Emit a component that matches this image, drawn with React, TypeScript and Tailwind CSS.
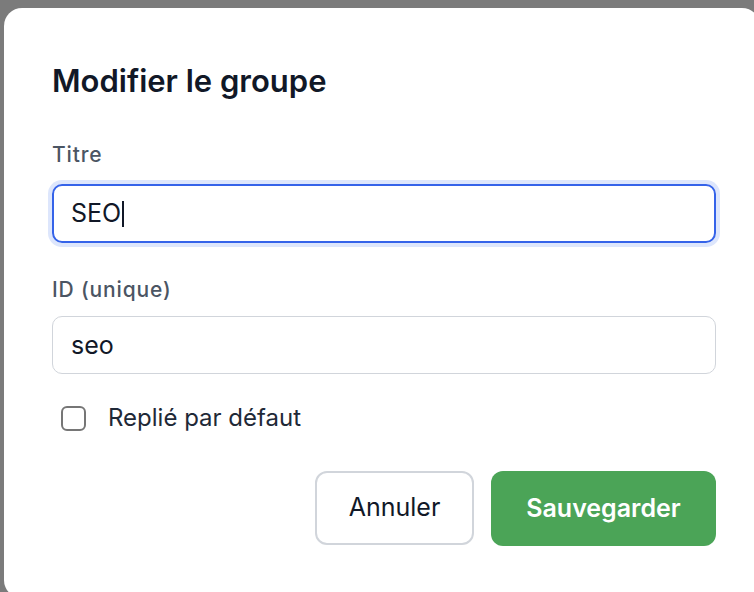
import { useState } from "react";

export default function App() {
  const [id, setId] = useState("seo");
  const [collapsed, setCollapsed] = useState(false);

  return (
    <div
      className="w-[754px] h-[592px] overflow-hidden bg-[#7b7b7b] pt-2 pl-1"
      style={{ fontFamily: "Inter, 'Noto Sans', 'Liberation Sans', sans-serif" }}
    >
      <div className="w-[756px] h-[590px] bg-white rounded-[18px] pl-12 pr-11 pt-[55px]">
        <h2 className="text-[31px] leading-9 font-semibold text-[#111827]">Modifier le groupe</h2>

        <div className="mt-[42px] text-[21px] leading-7 tracking-[0.04em] font-medium text-[#4b5563]">Titre</div>
        <div className="mt-[15px] h-[59px] rounded-[10px] border-2 border-[#3563e9] ring-4 ring-[#dde6fc] flex items-center pl-[17px] text-[25px] text-[#111827]">
          SEO<span className="inline-block w-[1.5px] h-[26px] bg-[#111827] ml-[1px]" />
        </div>

        <div className="mt-[33px] text-[21px] leading-7 tracking-[0.04em] font-medium text-[#4b5563]">ID (unique)</div>
        <input
          value={id}
          onChange={(e) => setId(e.target.value)}
          className="mt-3 w-full h-[58px] rounded-[10px] border border-[#d1d5db] pl-[18px] text-[25px] text-[#111827] outline-none"
        />

        <label className="mt-[28px] h-8 flex items-center gap-[22px] pl-[9px] text-[24px] leading-8 text-[#1f2937]">
          <input
            type="checkbox"
            checked={collapsed}
            onChange={(e) => setCollapsed(e.target.checked)}
            className="appearance-none w-[25px] h-[25px] border-2 border-[#767676] rounded-[6px] bg-white"
          />
          Replié par défaut
        </label>

        <div className="mt-[37px] flex justify-end gap-[17px]">
          <button className="w-[159px] h-[74px] rounded-[12px] border-2 border-[#d1d5db] bg-white text-[25px] text-[#111827]">
            Annuler
          </button>
          <button className="w-[225px] h-[75px] rounded-[12px] bg-[#4ba457] text-[25px] font-semibold text-white">
            Sauvegarder
          </button>
        </div>
      </div>
    </div>
  );
}
